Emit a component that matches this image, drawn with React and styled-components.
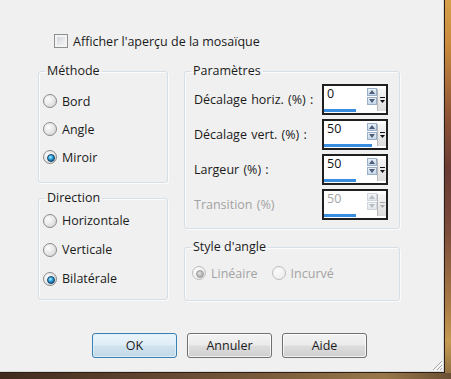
import React from "react";
import styled, { createGlobalStyle } from "styled-components";

const GlobalStyle = createGlobalStyle`
	html, body {
		margin: 0;
		padding: 0;
	}
	body {
		font-family: "Open Sans", "Liberation Sans", sans-serif;
		font-size: 12.5px;
		color: #1b1b1b;
	}
`;

const Frame = styled.div`
	width: 451px;
	height: 379px;
	overflow: hidden;
	background:
		linear-gradient(90deg, #3f2a1c 0%, #5e4330 30%, #7b5c3c 60%, #98784a 85%, #6b5034 100%) left bottom / 100% 6px no-repeat,
		linear-gradient(180deg, #d6a04a 0%, #c98a3e 12%, #8f5535 30%, #6a3b34 45%, #7a4a3b 60%, #a87a45 80%, #c59a52 90%, #8a6a40 100%);
`;

const Dialog = styled.div`
	position: relative;
	box-sizing: border-box;
	width: 445px;
	height: 373px;
	padding: 33px 0 0 38px;
	background: #f0f0f0;
	border-right: 1px solid #2b1e14;
	border-bottom: 1px solid #2b1e14;
	box-shadow: inset -1px -1px 0 #d8d8d8;
`;

const PreviewRow = styled.label`
	display: flex;
	align-items: center;
	gap: 5px;
	height: 16px;
	margin-left: 16px;
`;

const CheckBox = styled.span`
	box-sizing: border-box;
	width: 14px;
	height: 14px;
	border: 1px solid #8e8f8f;
	background: linear-gradient(135deg, #c9cdd2 0%, #e6e7e9 55%, #f8f8f8 100%);
	box-shadow: inset 0 0 0 2px #f4f4f4;
`;

const Columns = styled.div`
	display: flex;
	gap: 16px;
	margin-top: 14px;
`;

const Column = styled.div`
	display: flex;
	flex-direction: column;
	gap: ${(p) => p.$gap}px;
	width: ${(p) => p.$width}px;
`;

const Group = styled.fieldset`
	box-sizing: border-box;
	min-width: 0;
	margin: 0;
	padding: 0;
	border: 1px solid #d5dfe5;
	border-radius: 3px;
	box-shadow: inset 1px 1px 0 #fbfbfb, 1px 1px 0 #fbfbfb;

	legend {
		margin-left: 6px;
		padding: 0 2px;
		line-height: 16px;
		color: #1b1b1b;
	}
`;

const GroupBody = styled.div`
	padding: ${(p) => p.$pad};
`;

const RadioRow = styled.label`
	display: flex;
	align-items: center;
	gap: 5px;
	height: ${(p) => p.$height}px;
	color: ${(p) => (p.$disabled ? "#a3a3a3" : "#1b1b1b")};
`;

const Radio = styled.span`
	position: relative;
	box-sizing: border-box;
	flex: none;
	width: 14px;
	height: 14px;
	border-radius: 50%;
	border: 1px solid ${(p) => (p.$disabled ? "#bdbdbd" : "#8a8a8a")};
	background: ${(p) =>
		p.$disabled
			? "radial-gradient(circle at 35% 35%, #fbfbfb 0%, #f1f1f1 60%, #e6e6e6 100%)"
			: "radial-gradient(circle at 35% 35%, #fdfdfd 0%, #e9e9e9 45%, #cdcdcd 100%)"};

	&::after {
		content: "";
		display: ${(p) => (p.$checked ? "block" : "none")};
		position: absolute;
		left: 3px;
		top: 3px;
		width: 6px;
		height: 6px;
		border-radius: 50%;
		border: 0.5px solid ${(p) => (p.$disabled ? "#9a9a9a" : "#123f63")};
		background: ${(p) =>
			p.$disabled
				? "radial-gradient(circle at 40% 35%, #e2e2e2 0%, #b4b4b4 60%, #9c9c9c 100%)"
				: "radial-gradient(circle at 40% 35%, #a8ecff 0%, #35a8df 40%, #11649c 75%, #0b3e62 100%)"};
	}
`;

const InlineRadios = styled.div`
	display: flex;
	gap: 14px;
`;

const ParamGrid = styled.div`
	display: grid;
	grid-template-columns: 128px 66px;
	row-gap: 4px;
	align-items: center;
`;

const ParamLabel = styled.span`
	color: ${(p) => (p.$disabled ? "#a3a3a3" : "#1b1b1b")};
	word-spacing: 1px;
`;

const Spin = styled.div`
	display: flex;
	box-sizing: border-box;
	width: 66px;
	height: 31px;
	border: 2px solid #1f1f1f;
	background: #fff;
`;

const Field = styled.div`
	flex: 1;
	display: flex;
	flex-direction: column;
	justify-content: space-between;
	padding-bottom: 1px;
`;

const FieldTop = styled.div`
	display: flex;
	justify-content: space-between;
	align-items: flex-start;
	padding-left: 3px;
`;

const Value = styled.span`
	line-height: 16px;
	color: ${(p) => (p.$disabled ? "#a3a3a3" : "#111")};
`;

const Arrows = styled.div`
	display: flex;
	flex-direction: column;
	gap: 1px;
	margin-top: 2px;
`;

const ArrowBtn = styled.div`
	display: flex;
	align-items: center;
	justify-content: center;
	box-sizing: border-box;
	width: 10px;
	height: 8px;
	border: 1px solid ${(p) => (p.$disabled ? "#cfd6de" : "#9aaec6")};
	background: ${(p) =>
		p.$disabled
			? "linear-gradient(#f3f5f7, #e3e7eb)"
			: "linear-gradient(#e9f0f8, #c6d7ea)"};
`;

const Bar = styled.div`
	height: 3px;
	background: #3a8ee0;
`;

const Drop = styled.div`
	display: flex;
	align-items: center;
	justify-content: center;
	box-sizing: border-box;
	width: 9px;
	margin: 3px 0 2px;
	background: linear-gradient(#f6f6f6, #dcdcdc);
	border-left: 1px solid #b8b8b8;
`;

const ButtonRow = styled.div`
	display: flex;
	gap: 10px;
	margin: 32px 0 0 54px;
`;

const Button = styled.button`
	box-sizing: border-box;
	width: 85px;
	height: 25px;
	padding: 0;
	font: inherit;
	color: #1b1b1b;
	border-radius: 3px;
	border: 1px solid ${(p) => (p.$default ? "#3c7fb1" : "#707070")};
	background: ${(p) =>
		p.$default
			? "linear-gradient(#eaf4fb 0%, #e0edf6 48%, #cfe2ef 52%, #c3d9e8 100%)"
			: "linear-gradient(#f3f3f3 0%, #ebebeb 48%, #dddddd 52%, #cfcfcf 100%)"};
	box-shadow: inset 0 0 0 1px ${(p) => (p.$default ? "rgba(220,240,252,0.9)" : "rgba(255,255,255,0.75)")};
`;

const Grip = styled.svg`
	position: absolute;
	right: 1px;
	bottom: 1px;
`;

function SpinArrow({ up, disabled }) {
	const c = disabled ? "#b4bcc6" : "#4c5f77";
	return (
		<ArrowBtn $disabled={disabled}>
			<svg width="6" height="4" viewBox="0 0 6 4">
				<polygon points={up ? "0,4 6,4 3,0" : "0,0 6,0 3,4"} fill={c} />
			</svg>
		</ArrowBtn>
	);
}

function SpinBox({ value, fill, disabled }) {
	const c = disabled ? "#a9a9a9" : "#111";
	return (
		<Spin>
			<Field>
				<FieldTop>
					<Value $disabled={disabled}>{value}</Value>
					<Arrows>
						<SpinArrow up disabled={disabled} />
						<SpinArrow disabled={disabled} />
					</Arrows>
				</FieldTop>
				<Bar style={{ width: `${fill * 100}%` }} />
			</Field>
			<Drop>
				<svg width="5" height="7" viewBox="0 0 5 7">
					<rect x="0" y="0" width="5" height="1" fill={c} />
					<polygon points="0,3 5,3 2.5,6" fill={c} />
				</svg>
			</Drop>
		</Spin>
	);
}

function RadioOption({ label, checked, disabled, height }) {
	return (
		<RadioRow $height={height} $disabled={disabled}>
			<Radio $checked={checked} $disabled={disabled} />
			{label}
		</RadioRow>
	);
}

const params = [
	{ label: "Décalage horiz. (%) :", value: "0", fill: 0.6 },
	{ label: "Décalage vert. (%) :", value: "50", fill: 0.9 },
	{ label: "Largeur (%) :", value: "50", fill: 0.6 },
	{ label: "Transition (%)", value: "50", fill: 0.6, disabled: true },
];

export default function App() {
	return (
		<>
			<GlobalStyle />
			<Frame>
				<Dialog>
					<PreviewRow>
						<CheckBox />
						Afficher l'aperçu de la mosaïque
					</PreviewRow>
					<Columns>
						<Column $width={130} $gap={7}>
							<Group>
								<legend>Méthode</legend>
								<GroupBody $pad="8px 0 11px 4px">
									<RadioOption label="Bord" height={28} />
									<RadioOption label="Angle" height={28} />
									<RadioOption label="Miroir" height={28} checked />
								</GroupBody>
							</Group>
							<Group>
								<legend>Direction</legend>
								<GroupBody $pad="0 0 6px 4px">
									<RadioOption label="Horizontale" height={29} />
									<RadioOption label="Verticale" height={29} />
									<RadioOption label="Bilatérale" height={29} checked />
								</GroupBody>
							</Group>
						</Column>
						<Column $width={216} $gap={10}>
							<Group>
								<legend>Paramètres</legend>
								<GroupBody $pad="5px 0 8px 9px">
									<ParamGrid>
										{params.map((p) => (
											<React.Fragment key={p.label}>
												<ParamLabel $disabled={p.disabled}>{p.label}</ParamLabel>
												<SpinBox value={p.value} fill={p.fill} disabled={p.disabled} />
											</React.Fragment>
										))}
									</ParamGrid>
								</GroupBody>
							</Group>
							<Group>
								<legend>Style d'angle</legend>
								<GroupBody $pad="4px 0 13px 7px">
									<InlineRadios>
										<RadioOption label="Linéaire" height={28} checked disabled />
										<RadioOption label="Incurvé" height={28} disabled />
									</InlineRadios>
								</GroupBody>
							</Group>
						</Column>
					</Columns>
					<ButtonRow>
						<Button $default>OK</Button>
						<Button>Annuler</Button>
						<Button>Aide</Button>
					</ButtonRow>
					<Grip width="12" height="12" viewBox="0 0 12 12">
						<g strokeWidth="1">
							<line x1="11" y1="2" x2="2" y2="11" stroke="#a5a5a5" />
							<line x1="11" y1="6" x2="6" y2="11" stroke="#a5a5a5" />
							<line x1="11" y1="9" x2="9" y2="11" stroke="#a5a5a5" />
							<line x1="12" y1="3" x2="3" y2="12" stroke="#ffffff" />
							<line x1="12" y1="7" x2="7" y2="12" stroke="#ffffff" />
						</g>
					</Grip>
				</Dialog>
			</Frame>
		</>
	);
}
